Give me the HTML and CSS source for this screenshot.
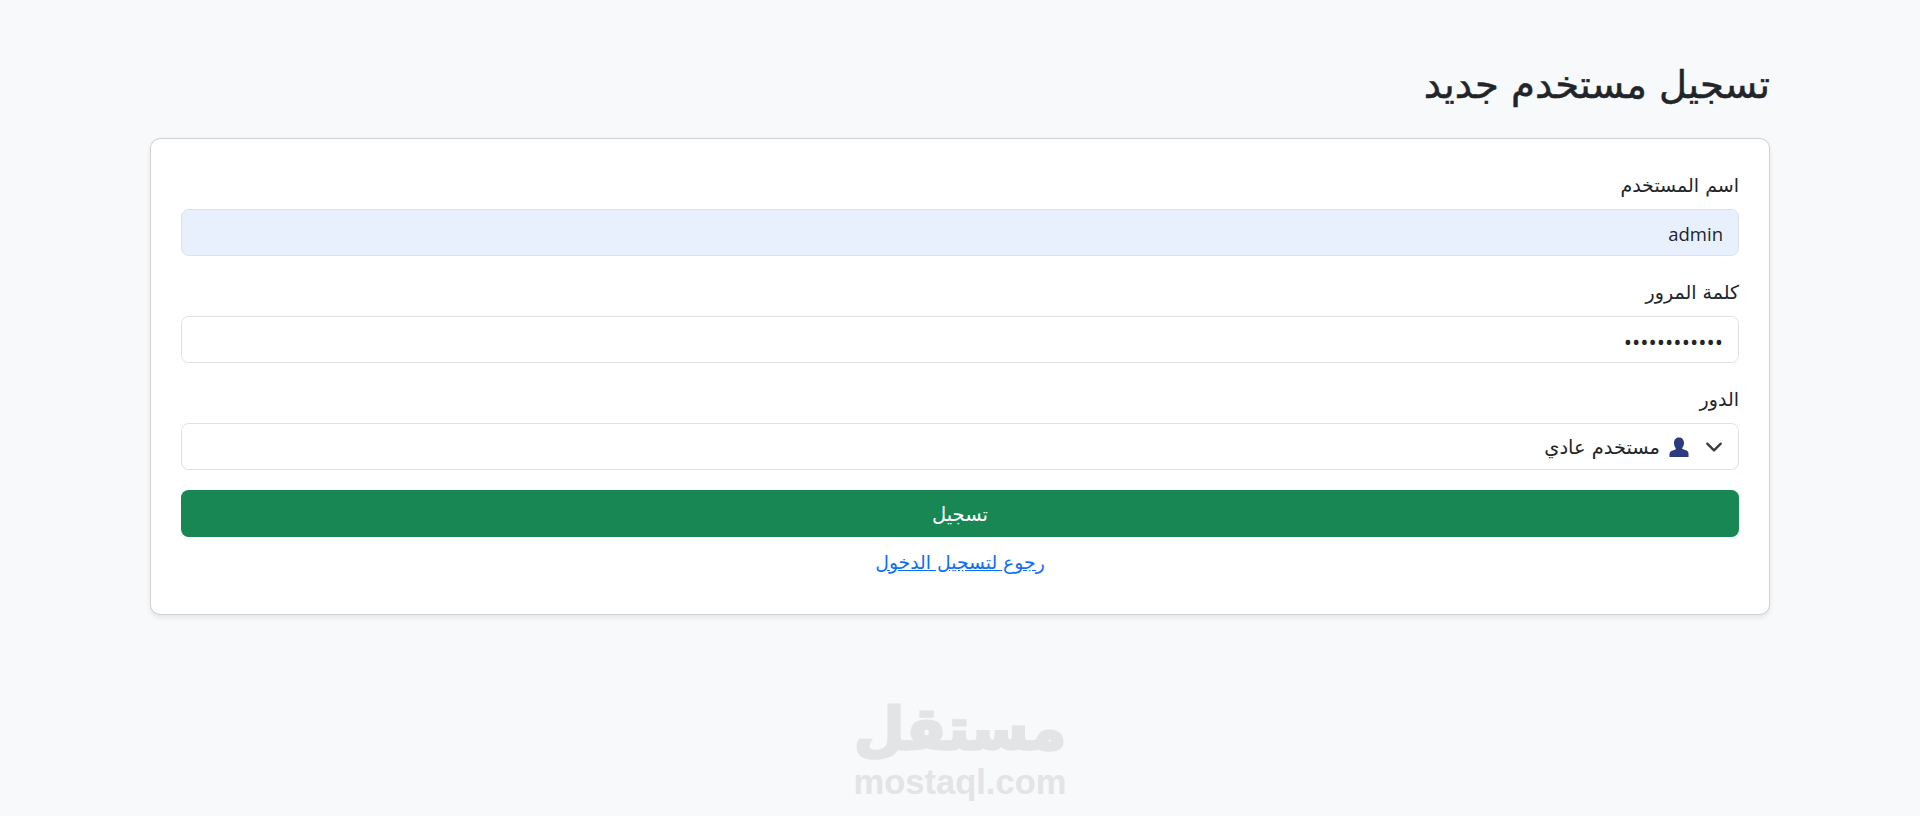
FILE: index.html
```html
<!DOCTYPE html>
<html lang="ar" dir="rtl">

<head>
  <meta charset="UTF-8" />
  <meta name="viewport" content="width=device-width, initial-scale=1.0" />
  <title>تسجيل مستخدم جديد</title>
  <link rel="stylesheet" href="styles.css">
</head>

<body>
  <div class="container">
    <h2 class="page-title">تسجيل مستخدم جديد</h2>

    <form class="card">
      <div class="field">
        <label for="username">اسم المستخدم</label>
        <input class="control control-filled" id="username" type="text" value="admin" dir="ltr">
      </div>

      <div class="field">
        <label for="password">كلمة المرور</label>
        <input class="control control-secret" id="password" type="password" value="123456789012" dir="ltr">
      </div>

      <div class="field">
        <label>الدور</label>
        <div class="control select">
          <svg class="chevron" viewBox="0 0 16 16" width="18" height="18">
            <path fill="none" stroke="#343a40" stroke-linecap="round" stroke-linejoin="round" stroke-width="2" d="m2 5 6 6 6-6" />
          </svg>
          <svg class="bust" viewBox="0 0 20 20" width="20" height="20">
            <path fill="#2e3a80" d="M5 6c0-3.500 2.200-5.500 5-5.500S15 2.500 15 6c0 1.800-.6 3.400-1.500 4.500-.5.600-.5 1.100.1 1.500.6.400 1.500.6 2.700 1 1.900.6 3.200 1.600 3.200 3.700V20H.5v-2.800c0-2.100 1.300-3.100 3.200-3.700 1.200-.4 2.100-.6 2.700-1 .6-.4.600-.9.100-1.500C5.600 9.400 5 7.800 5 6z" />
          </svg>
          <span>مستخدم عادي</span>
        </div>
      </div>

      <button class="btn-submit" type="button">تسجيل</button>

      <div class="back-link">
        <a href="#">رجوع لتسجيل الدخول</a>
      </div>
    </form>
  </div>

  <div class="watermark">
    <div class="watermark-ar">مستقل</div>
    <div class="watermark-en">mostaql.com</div>
  </div>
</body>

</html>
```

FILE: styles.css
```css
* {
  box-sizing: border-box;
}

body {
  margin: 0;
  min-height: 816px;
  background: #f8f9fa;
  color: #212529;
  font-family: "DejaVu Sans", "Noto Sans", sans-serif;
  font-size: 20px;
  line-height: 1.5;
  overflow: hidden;
}

.container {
  width: 1620px;
  margin: 0 auto;
  padding-top: 60px;
}

.page-title {
  height: 48px;
  margin: 0 0 30px;
  padding-top: 1px;
  font-size: 38.6px;
  font-weight: 500;
  line-height: 48px;
  -webkit-text-stroke: 0.5px #212529;
}

.card {
  display: flex;
  flex-direction: column;
  padding: 30px;
  background: #fff;
  border: 1.25px solid rgba(0, 0, 0, 0.175);
  border-radius: 10px;
  box-shadow: 0 2.5px 5px rgba(0, 0, 0, 0.075);
}

.field {
  margin-bottom: 20px;
}

.field label {
  display: block;
  height: 30px;
  margin-bottom: 10px;
  padding-top: 1px;
  font-size: 19px;
  line-height: 30px;
}

.control {
  display: block;
  width: 100%;
  height: 47px;
  padding: 8.500px 15px 6.500px;
  background: #fff;
  border: 1.25px solid #dee2e6;
  border-radius: 7.500px;
  color: #212529;
  font-family: "Open Sans", "DejaVu Sans", sans-serif;
  font-size: 18.500px;
  line-height: 30px;
  text-align: right;
  outline: none;
}

.control-filled {
  background: #e8f0fe;
}

.control-secret {
  font-size: 22px;
}

.select {
  display: flex;
  align-items: center;
  font-family: "DejaVu Sans", sans-serif;
  font-size: 19.4px;
}

.chevron {
  margin-top: -2px;
  margin-left: 16.500px;
}

.bust {
  margin-top: -2px;
  margin-left: 8.500px;
}

.btn-submit {
  display: block;
  width: 100%;
  height: 47px;
  padding: 2px 0 0;
  background: #198754;
  border: 0;
  border-radius: 7.500px;
  color: #fff;
  font-family: "DejaVu Sans", sans-serif;
  font-size: 19.500px;
}

.back-link {
  height: 30px;
  margin-top: 12px;
  margin-bottom: 4.500px;
  text-align: center;
  font-size: 18.800px;
}

.back-link a {
  color: #0d6efd;
}

/* logo sits over the page, bottom centre */
.watermark {
  position: absolute;
  left: 850px;
  top: 694px;
  width: 220px;
  text-align: center;
  color: #e3e4e5;
  pointer-events: none;
}

.watermark-ar {
  font-size: 58px;
  font-weight: 700;
  line-height: 70px;
  -webkit-text-stroke: 3px #e3e4e5;
}

.watermark-en {
  direction: ltr;
  font-family: "Liberation Sans", sans-serif;
  font-size: 34.500px;
  font-weight: 700;
  line-height: 36px;
}
```
